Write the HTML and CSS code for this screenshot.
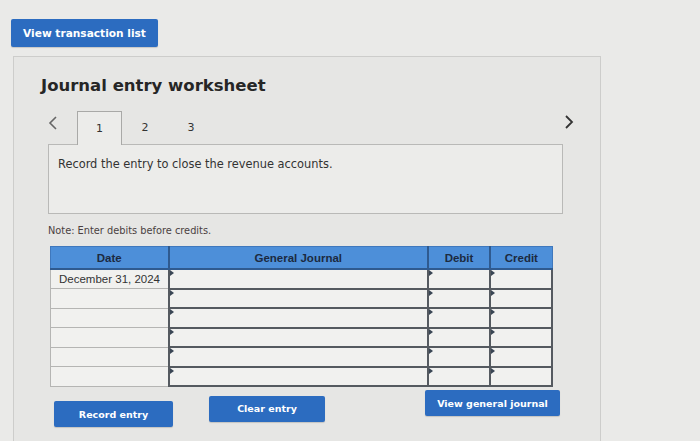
FILE: index.html
```html
<!DOCTYPE html>
<html>
<head>
<meta charset="utf-8">
<link rel="stylesheet" href="styles.css">
</head>
<body>
<button class="btn btn-top">View transaction list</button>
<div class="panel">
  <h1 class="title">Journal entry worksheet</h1>
  <div class="sheet">
    <div class="nav">
      <div class="tabs">
        <span class="chev chev-left">
          <svg width="10" height="14" viewBox="0 0 10 14"><path d="M8 1 L2 7 L8 13" fill="none" stroke="#666" stroke-width="1.6"/></svg>
        </span>
        <span class="tab active">1</span>
        <span class="tab">2</span>
        <span class="tab">3</span>
      </div>
      <span class="chev chev-right">
        <svg width="10" height="14" viewBox="0 0 10 14"><path d="M2 1 L8 7 L2 13" fill="none" stroke="#333" stroke-width="1.8"/></svg>
      </span>
    </div>
    <div class="prompt">Record the entry to close the revenue accounts.</div>
    <p class="note">Note: Enter debits before credits.</p>
    <table class="journal">
      <thead>
        <tr><th class="c-date">Date</th><th class="c-acct">General Journal</th><th class="c-num">Debit</th><th class="c-num">Credit</th></tr>
      </thead>
      <tbody>
        <tr><td class="d">December 31, 2024</td><td class="in"></td><td class="in"></td><td class="in"></td></tr>
        <tr><td class="d"></td><td class="in"></td><td class="in"></td><td class="in"></td></tr>
        <tr><td class="d"></td><td class="in"></td><td class="in"></td><td class="in"></td></tr>
        <tr><td class="d"></td><td class="in"></td><td class="in"></td><td class="in"></td></tr>
        <tr><td class="d"></td><td class="in"></td><td class="in"></td><td class="in"></td></tr>
        <tr><td class="d"></td><td class="in"></td><td class="in"></td><td class="in"></td></tr>
      </tbody>
    </table>
    <div class="actions">
      <button class="btn btn-record">Record entry</button>
      <button class="btn btn-clear">Clear entry</button>
      <button class="btn btn-view">View general journal</button>
    </div>
  </div>
</div>
</body>
</html>
```
FILE: styles.css
```css
html, body {
  margin: 0;
  padding: 0;
  background: #eaeae8;
  font-family: "DejaVu Sans", Verdana, sans-serif;
  color: #2a2a2a;
  overflow: hidden;
}

.btn {
  display: flex;
  align-items: center;
  justify-content: center;
  background: #2c6cc0;
  color: #fff;
  border: none;
  border-radius: 2px;
  font-family: "DejaVu Sans", Verdana, sans-serif;
  font-weight: bold;
  font-size: 9.5px;
  padding: 0;
  box-shadow: 0 1px 1px rgba(0,0,0,0.15);
}

.btn-top {
  margin: 19px 0 0 11px;
  width: 147px;
  height: 28px;
  font-size: 10.6px;
}

.panel {
  margin: 9px 0 0 13px;
  width: 588px;
  height: 400px;
  background: #e6e6e4;
  border: 1px solid #cdcdcb;
  box-sizing: border-box;
  padding: 19px 0 0 27px;
}

.title {
  margin: 0;
  font-size: 16.5px;
  font-weight: bold;
  color: #262626;
  line-height: 20px;
}

.sheet {
  margin: 14px 0 0 7px;
  width: 515px;
}

.nav {
  display: flex;
  align-items: flex-end;
}

.tabs {
  display: flex;
  align-items: flex-end;
  flex: 0 0 515px;
  height: 34px;
}

.chev {
  display: flex;
  align-items: center;
  flex-shrink: 0;
}

.chev-left {
  width: 29px;
  height: 34px;
  box-sizing: border-box;
  padding-bottom: 8px;
}

.chev-right {
  margin-left: 1px;
  height: 34px;
  padding-bottom: 10px;
  box-sizing: border-box;
}

.tab {
  width: 46px;
  height: 34px;
  display: flex;
  align-items: center;
  justify-content: center;
  font-size: 11px;
  color: #333;
  box-sizing: border-box;
}

.tab.active {
  width: 45px;
  background: #ececea;
  border: 1px solid #a9a9a7;
  border-bottom: none;
  position: relative;
  top: 1px;
}

.prompt {
  height: 70px;
  border: 1px solid #b9b9b7;
  background: #ececea;
  box-sizing: border-box;
  padding: 12px 0 0 9px;
  font-size: 11.4px;
  color: #333;
}

.note {
  margin: 11px 0 0 0;
  font-size: 9.8px;
  color: #4a3f3f;
  line-height: 12px;
}

.journal {
  margin: 9px 0 0 2px;
  width: 503px;
  border-collapse: collapse;
  font-family: "Liberation Sans", Arial, sans-serif;
  table-layout: fixed;
}

.journal th {
  background: #4d8fd9;
  color: #1c2a40;
  font-weight: bold;
  font-size: 11.5px;
  height: 21px;
  padding: 0;
  border: 1px solid #3f78bd;
  border-bottom: 2px solid #2f5a8f;
}

.c-date { width: 116px; }
.c-acct { width: 256px; border-left: 2px solid #2f5a8f !important; }
.c-num { width: 60px; border-left: 2px solid #2f5a8f !important; }

.journal td {
  height: 17.5px;
  padding: 0;
  background: #f1f1ef;
}

.journal td.d {
  border: 1px solid #b5b5b3;
  font-size: 11.5px;
  color: #333;
  padding-left: 8px;
}

.journal td.in {
  border: 2px solid #555a60;
  position: relative;
}

.journal td.in::before {
  content: "";
  position: absolute;
  left: 0;
  top: 0;
  border-top: 3px solid transparent;
  border-bottom: 3px solid transparent;
  border-left: 4px solid #3a4654;
}

.actions {
  display: flex;
  height: 37px;
  margin-top: 3px;
}

.actions .btn {
  height: 26px;
}

.btn-record {
  width: 119px;
  margin-left: 6px;
  align-self: flex-end;
}

.btn-clear {
  width: 116px;
  margin-left: 36px;
  align-self: center;
}

.btn-view {
  width: 135px;
  margin-left: 100px;
  align-self: flex-start;
}
```
